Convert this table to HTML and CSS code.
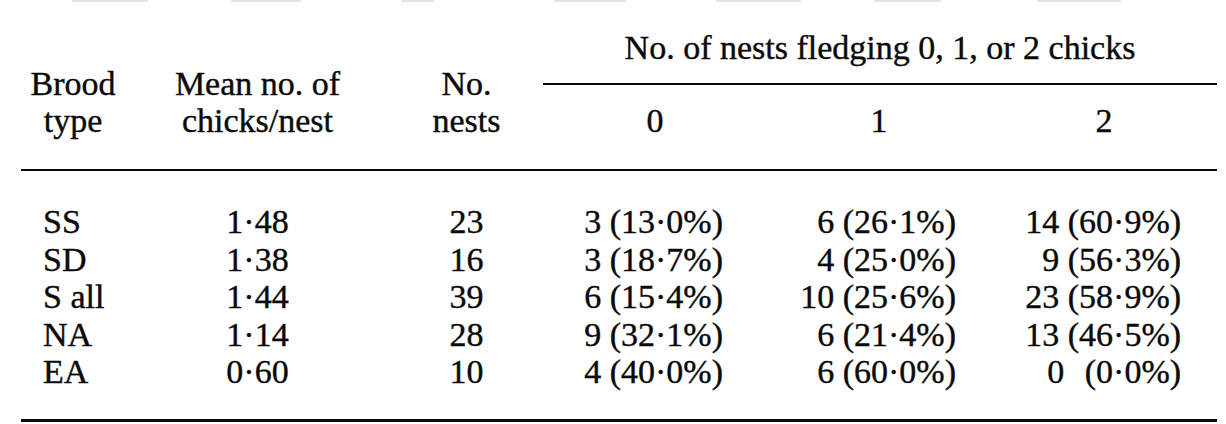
FILE: index.html
```html
<!DOCTYPE html>
<html lang="en">
<head>
<meta charset="utf-8">
<title>Brood type table</title>
<link rel="stylesheet" href="styles.css">
</head>
<body>
<div class="scrap">
  <span class="frag f1"></span><span class="frag f2"></span><span class="frag f3"></span><span class="frag f4"></span><span class="frag f5"></span><span class="frag f6"></span><span class="frag f7"></span>
</div>
<table class="tbl">
  <colgroup>
    <col class="c-type"><col class="c-mean"><col class="c-n"><col class="c-f0"><col class="c-f1"><col class="c-f2">
  </colgroup>
  <thead>
    <tr class="hr1">
      <th rowspan="2" class="stub">Brood<br>type</th>
      <th rowspan="2" class="stub">Mean no. of<br>chicks/nest</th>
      <th rowspan="2" class="stub">No.<br>nests</th>
      <th colspan="3" class="span">No. of nests fledging 0, 1, or 2 chicks</th>
    </tr>
    <tr class="hr2">
      <th class="sub">0</th>
      <th class="sub">1</th>
      <th class="sub">2</th>
    </tr>
  </thead>
  <tbody>
    <tr class="first">
      <td class="type">SS</td><td class="ctr">1·48</td><td class="ctr">23</td>
      <td class="v0">3 (13·0%)</td><td class="v1">6 (26·1%)</td><td class="v2">14 (60·9%)</td>
    </tr>
    <tr>
      <td class="type">SD</td><td class="ctr">1·38</td><td class="ctr">16</td>
      <td class="v0">3 (18·7%)</td><td class="v1">4 (25·0%)</td><td class="v2">9 (56·3%)</td>
    </tr>
    <tr>
      <td class="type">S all</td><td class="ctr">1·44</td><td class="ctr">39</td>
      <td class="v0">6 (15·4%)</td><td class="v1">10 (25·6%)</td><td class="v2">23 (58·9%)</td>
    </tr>
    <tr>
      <td class="type">NA</td><td class="ctr">1·14</td><td class="ctr">28</td>
      <td class="v0">9 (32·1%)</td><td class="v1">6 (21·4%)</td><td class="v2">13 (46·5%)</td>
    </tr>
    <tr class="last">
      <td class="type">EA</td><td class="ctr">0·60</td><td class="ctr">10</td>
      <td class="v0">4 (40·0%)</td><td class="v1">6 (60·0%)</td><td class="v2">0<span class="gap"></span> (0·0%)</td>
    </tr>
  </tbody>
</table>
</body>
</html>
```
FILE: styles.css
```css
html, body {
  margin: 0;
  padding: 0;
  background: #ffffff;
}
body {
  width: 1226px;
  height: 424px;
  overflow: hidden;
  font-family: "Liberation Serif", serif;
  color: #0a0a0a;
}
.scrap {
  display: flex;
  height: 4px;
}
.frag {
  display: block;
  height: 2px;
  background: #e4e4e4;
}
.f1 { margin-left: 72px; width: 76px; }
.f2 { margin-left: 83px; width: 70px; }
.f3 { margin-left: 100px; width: 33px; }
.f4 { margin-left: 120px; width: 72px; }
.f5 { margin-left: 90px; width: 85px; }
.f6 { margin-left: 73px; width: 67px; }
.f7 { margin-left: 96px; width: 84px; }

.tbl {
  margin-left: 21px;
  width: 1196px;
  border-collapse: collapse;
  table-layout: fixed;
  font-family: "Liberation Serif", serif;
  font-size: 34px;
  line-height: 37px;
  -webkit-text-stroke: 0.4px #0a0a0a;
}
.c-type { width: 104px; }
.c-mean { width: 265px; }
.c-n { width: 153px; }
.c-f0 { width: 224px; }
.c-f1 { width: 224px; }
.c-f2 { width: 226px; }

th {
  font-weight: normal;
  text-align: center;
  padding: 0;
}
.stub {
  vertical-align: bottom;
  padding-bottom: 30px;
  border-bottom: 2px solid #0a0a0a;
}
.span {
  padding-top: 25px;
  padding-bottom: 17px;
  border-bottom: 2px solid #0a0a0a;
}
.sub {
  padding-top: 17px;
  padding-bottom: 30px;
  border-bottom: 2px solid #0a0a0a;
}

td {
  padding: 0;
  line-height: 37.5px;
  white-space: nowrap;
}
tr.first td { padding-top: 32px; }
tr.last td {
  padding-bottom: 28px;
  border-bottom: 3px solid #0a0a0a;
}
.type { text-align: left; padding-left: 22px; }
.ctr { text-align: center; }
.v0 { text-align: right; padding-right: 44px; }
.v1 { text-align: right; padding-right: 35px; }
.v2 { text-align: right; padding-right: 36px; }
.gap { display: inline-block; width: 12px; }
```
